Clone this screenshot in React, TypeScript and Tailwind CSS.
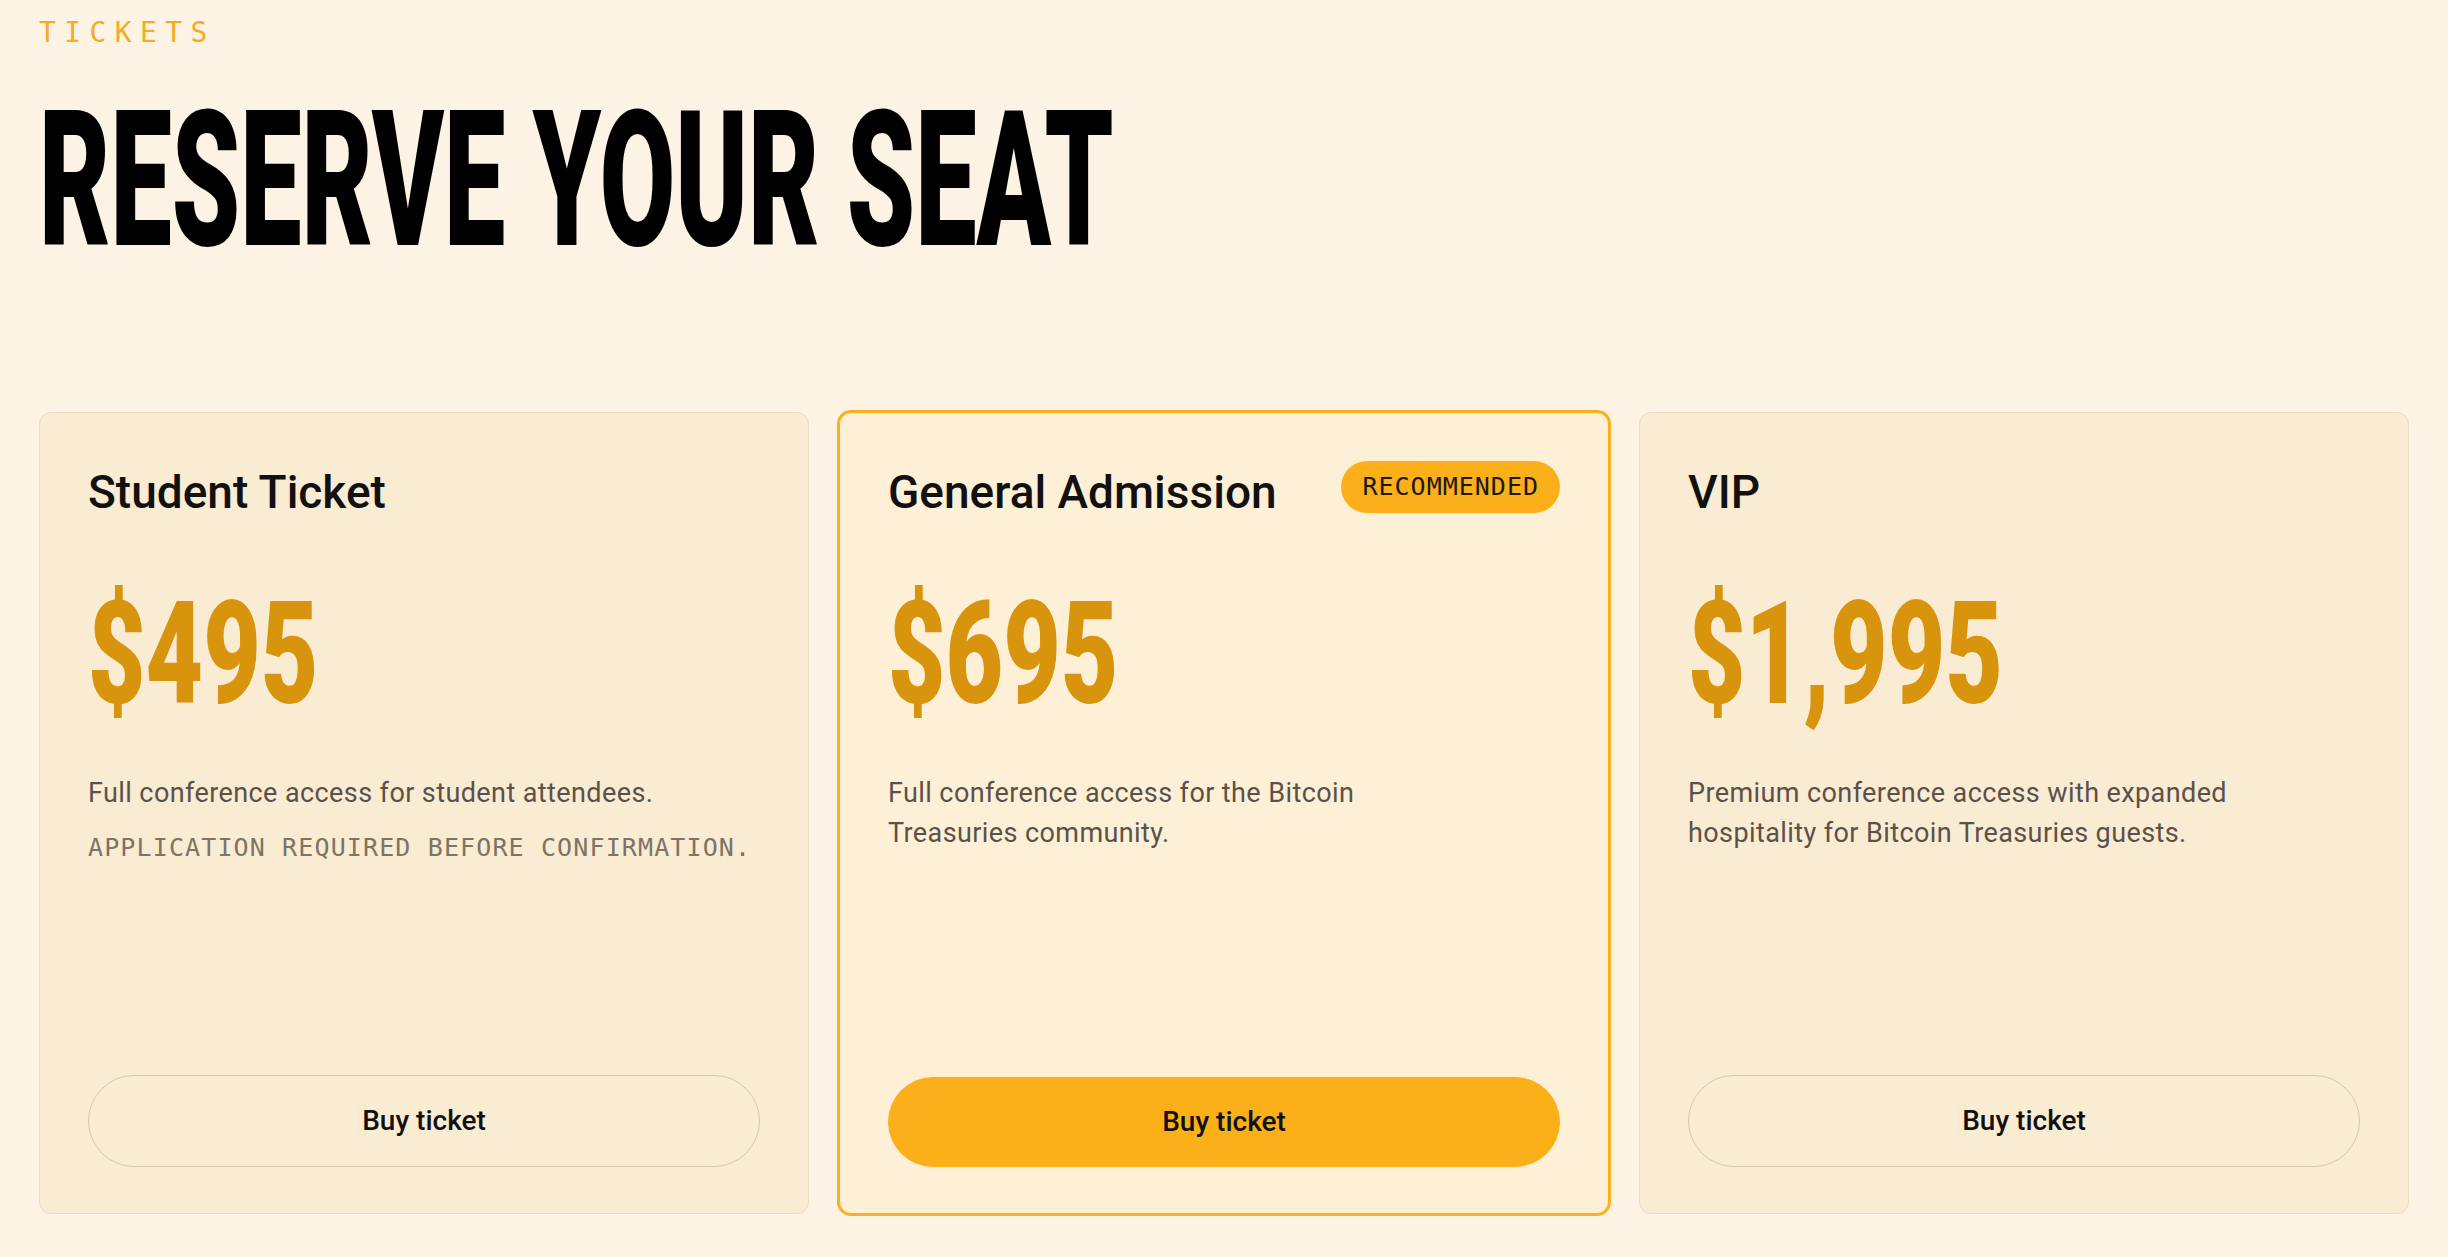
import React from "react";

type Ticket = {
  name: string;
  price: string;
  desc: string;
  note?: string;
  featured?: boolean;
};

const tickets: Ticket[] = [
  {
    name: "Student Ticket",
    price: "$495",
    desc: "Full conference access for student attendees.",
    note: "APPLICATION REQUIRED BEFORE CONFIRMATION.",
  },
  {
    name: "General Admission",
    price: "$695",
    desc: "Full conference access for the Bitcoin Treasuries community.",
    featured: true,
  },
  {
    name: "VIP",
    price: "$1,995",
    desc: "Premium conference access with expanded hospitality for Bitcoin Treasuries guests.",
  },
];

function Card({ t }: { t: Ticket }) {
  return (
    <div
      className={
        t.featured
          ? "flex h-[802px] flex-col rounded-[12px] border-[1.5px] border-[#f9b11f] bg-[#fef0d7] px-[48px] pt-[48px] pb-[46px] ring-2 ring-[#f9b11f]"
          : "flex h-[802px] flex-col rounded-[12px] border-[1.5px] border-[#e9dcc3] bg-[#faebd3] px-[48px] pt-[48px] pb-[46px]"
      }
    >
      <div className="flex items-start justify-between">
        <h3 className="mt-[5px] text-[46px] leading-[52px] font-medium text-[#111111]">{t.name}</h3>
        {t.featured && (
          <span className="flex h-[52px] items-center rounded-full bg-[#fbb01a] px-[21px] font-['DejaVu_Sans_Mono',monospace] text-[25px] tracking-[0.04em] text-[#1c1917]">
            RECOMMENDED
          </span>
        )}
      </div>
      <div className="mt-[66px] h-[142px] origin-left scale-x-[0.7] whitespace-nowrap text-[142px] leading-[142px] font-black text-[#d8940c]">
        {t.price}
      </div>
      <p className="mt-[47px] max-w-[590px] text-[27px] leading-[40px] tracking-[0.015em] text-[#5a5249]">{t.desc}</p>
      {t.note && (
        <p className="mt-[15px] font-['DejaVu_Sans_Mono',monospace] text-[25px] leading-[40px] tracking-[0.045em] text-[#7d7466]">
          {t.note}
        </p>
      )}
      <button
        className={
          t.featured
            ? "mt-auto h-[90px] w-full rounded-full border-[1.5px] border-[#fbb01a] bg-[#fbb01a] text-[28px] font-medium text-[#111111]"
            : "mt-auto h-[92px] w-full rounded-full border-[1.5px] border-[#d5c8ad] bg-transparent text-[28px] font-medium text-[#111111]"
        }
      >
        Buy ticket
      </button>
    </div>
  );
}

export default function App() {
  return (
    <div className="min-h-screen bg-[#fdf3e5] px-[39px] pt-[19px] font-['Roboto',sans-serif]">
      <p className="font-['DejaVu_Sans_Mono',monospace] text-[28px] leading-[28px] tracking-[0.3em] text-[#f5ab22]">
        TICKETS
      </p>
      <h1 className="mt-[38px] h-[190px] origin-left scale-x-[0.576] whitespace-nowrap text-[190px] leading-[190px] font-black text-black">
        RESERVE YOUR SEAT
      </h1>
      <div className="mt-[137px] grid grid-cols-3 gap-[30px]">
        {tickets.map((t) => (
          <Card key={t.name} t={t} />
        ))}
      </div>
    </div>
  );
}
